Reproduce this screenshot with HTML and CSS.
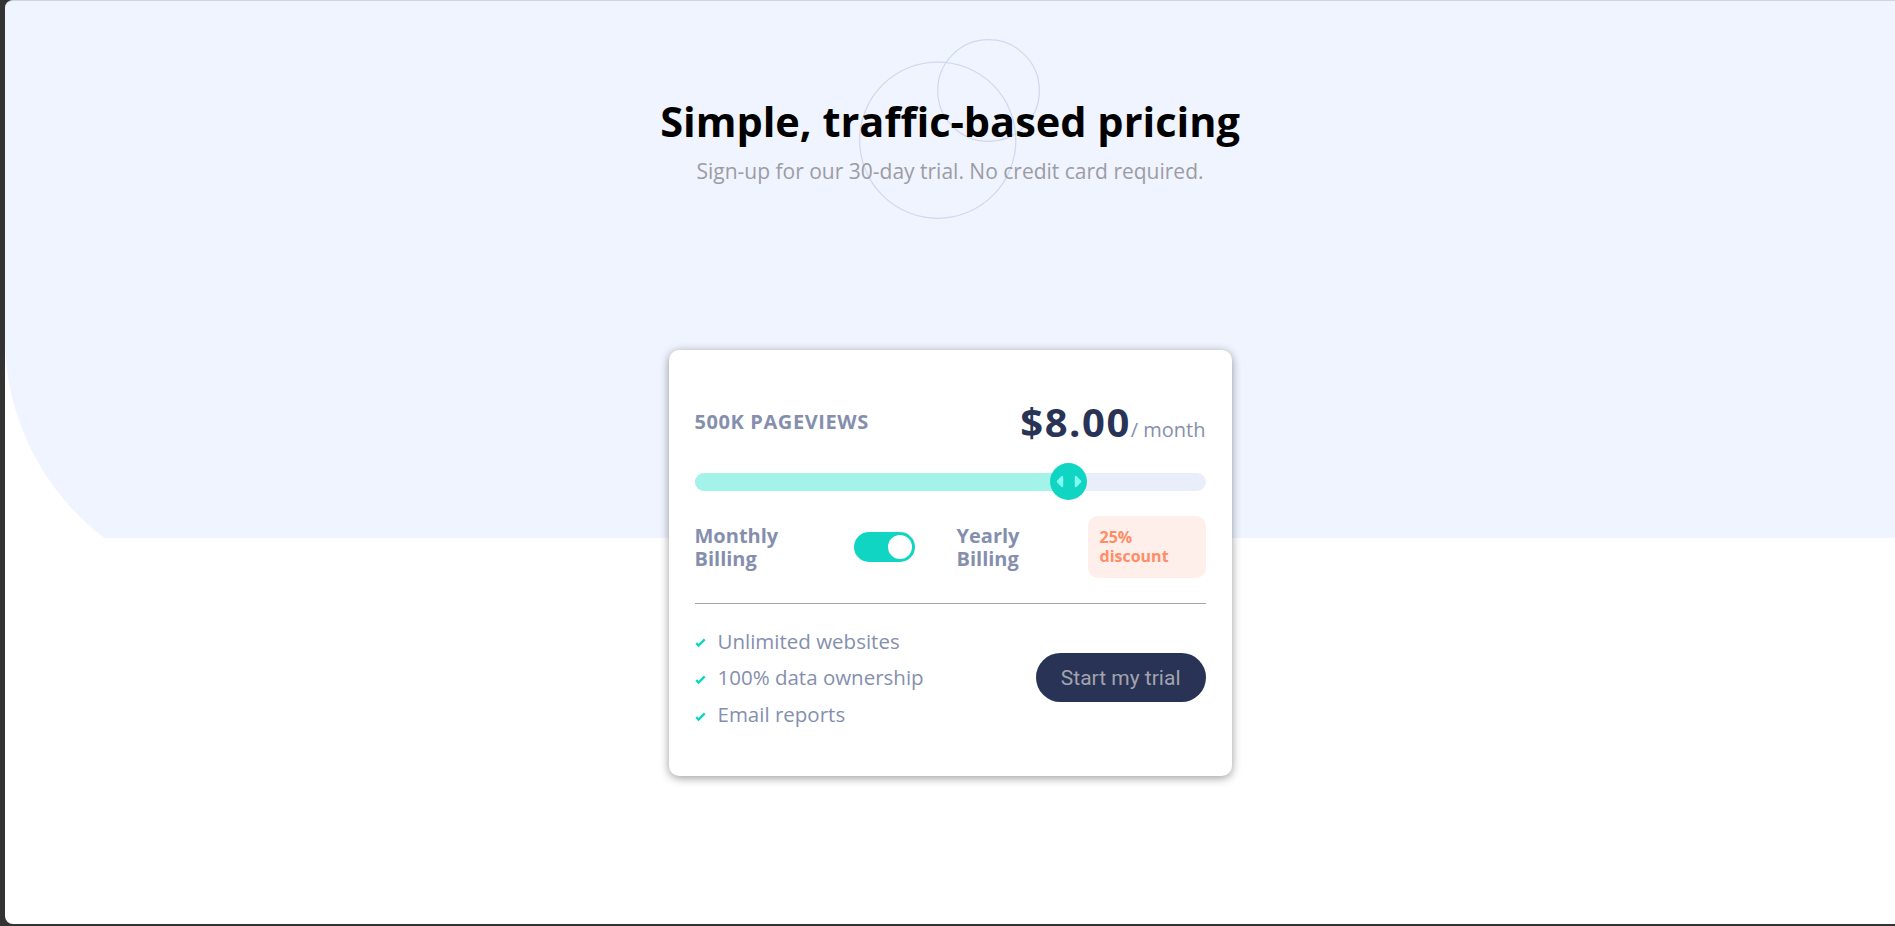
FILE: index.html
```html
<!DOCTYPE html>
<html lang="en">
<head>
  <meta charset="UTF-8" />
  <title>Interactive Pricing Component</title>
  <link rel="stylesheet" href="styles.css">
</head>
<body>

<div class="frame">
  <header class="hero">
    <!-- decorative circles behind the heading -->
    <svg class="circles" width="181" height="180" viewBox="0 0 146 145" aria-hidden="true">
      <g fill="none" stroke="#cfd8ef">
        <circle cx="63.5" cy="81.5" r="63" />
        <circle cx="104.5" cy="41.5" r="41" />
      </g>
    </svg>
    <h1>Simple, traffic-based pricing</h1>
    <p class="subtitle">Sign-up for our 30-day trial. No credit card required.</p>
  </header>

  <main class="card">
    <div class="card-head">
      <span class="pageviews">500K Pageviews</span>
      <p class="price"><span class="amount">$8.00</span><span class="period">/ month</span></p>
    </div>

    <!-- Slider: --value is the position (0..1) -->
    <div class="slider" style="--value: 0.75">
      <div class="track"><div class="track-fill"></div></div>
      <div class="thumb">
        <svg width="26" height="15" viewBox="0 0 22 13">
          <path fill="#80fff3" d="M16 2.558v7.884a1 1 0 001.735.679l3.639-3.943a1 1 0 000-1.356l-3.64-3.943A1 1 0 0016 2.558zM6 2.558v7.884a1 1 0 01-1.735.679L.626 7.178a1 1 0 010-1.356l3.64-3.943A1 1 0 016 2.558z"/>
        </svg>
      </div>
    </div>

    <div class="billing">
      <span class="billing-label">Monthly Billing</span>
      <span class="switch"><span class="knob"></span></span>
      <span class="billing-label">Yearly Billing</span>
      <span class="discount">25% discount</span>
    </div>

    <hr class="divider">

    <div class="card-foot">
      <ul class="features">
        <li><svg class="check" width="11" height="10" viewBox="0 0 9 8"><path fill="none" stroke="#10d5c2" stroke-width="2" d="M1 4.134l1.907 1.908L7.949 1"/></svg>Unlimited websites</li>
        <li><svg class="check" width="11" height="10" viewBox="0 0 9 8"><path fill="none" stroke="#10d5c2" stroke-width="2" d="M1 4.134l1.907 1.908L7.949 1"/></svg>100% data ownership</li>
        <li><svg class="check" width="11" height="10" viewBox="0 0 9 8"><path fill="none" stroke="#10d5c2" stroke-width="2" d="M1 4.134l1.907 1.908L7.949 1"/></svg>Email reports</li>
      </ul>
      <button class="button">Start my trial</button>
    </div>
  </main>
</div>

</body>
</html>
```

FILE: styles.css
```css
html, body {
  height: 100%;
}
body {
  margin: 0;
  padding: 0 0 2px 5px;
  box-sizing: border-box;
  background: #333;
  font-family: "Open Sans", "Noto Sans", sans-serif;
  overflow: hidden;
}
.frame {
  height: 924px;
  box-sizing: border-box;
  border-top: 1px solid #cfd4de;
  border-radius: 8px 0 0 8px;
  overflow: hidden;
  background: #fff url("data:image/svg+xml,%3Csvg xmlns='http://www.w3.org/2000/svg' width='1890' height='537'%3E%3Cpath fill='%23f0f4fe' d='M0 0H1890V537H99.34A251 251 0 0 1 0 337Z'/%3E%3C/svg%3E") no-repeat 0 0;
}

/* Header */
.hero {
  position: relative;
  padding-top: 92px;
  text-align: center;
}
.circles {
  position: absolute;
  top: 38px;
  left: calc(50% - 91px);
}
.hero h1 {
  position: relative;
  margin: 0;
  font-size: 41.5px;
  font-weight: 700;
  color: #000;
}
.subtitle {
  position: relative;
  margin: 8px 0 0;
  font-size: 21px;
  color: #9c9ca4;
}

/* Card */
.card {
  width: 511px;
  margin: 165px auto 0;
  padding: 44px 26px 43px;
  background: #fff;
  border-radius: 10px;
  box-shadow: 0 2px 10px rgba(0,0,0,0.4);
}
.card-head {
  display: flex;
  justify-content: space-between;
  align-items: center;
}
.pageviews {
  font-size: 20px;
  font-weight: 700;
  letter-spacing: 0.6px;
  text-transform: uppercase;
  color: #858fad;
}
.price {
  margin: 0;
  font-size: 40px;
}
.amount {
  font-weight: 700;
  letter-spacing: 1.5px;
  color: #293356;
}
.period {
  font-size: 20px;
  color: #858fad;
}

/* Slider */
.slider {
  position: relative;
  height: 37px;
  margin-top: 14px;
  display: flex;
  align-items: center;
}
.track {
  flex: 1;
  height: 18px;
  border-radius: 9px;
  background: #eaeefb;
  overflow: hidden;
}
.track-fill {
  height: 100%;
  width: calc(var(--value) * 100%);
  background: #a4f3eb;
}
.thumb {
  position: absolute;
  top: 0;
  left: calc((100% - 37px) * var(--value));
  width: 37px;
  height: 37px;
  border-radius: 50%;
  background: #10d5c2;
  display: flex;
  align-items: center;
  justify-content: center;
}

/* Billing toggle */
.billing {
  display: grid;
  grid-template-columns: 159px 103px 1fr auto;
  align-items: center;
  margin-top: 15.5px;
}
.billing-label {
  width: min-content;
  font-size: 20px;
  font-weight: 700;
  line-height: 23px;
  color: #858fad;
}
.switch {
  display: flex;
  justify-content: flex-end;
  align-items: center;
  width: 61px;
  height: 30px;
  padding: 3px;
  box-sizing: border-box;
  border-radius: 15px;
  background: #10d5c2;
}
.knob {
  width: 24px;
  height: 24px;
  border-radius: 50%;
  background: #fff;
}
.discount {
  width: 118px;
  height: 62px;
  box-sizing: border-box;
  padding: 12.5px 12px;
  border-radius: 10px;
  background: #feefea;
  color: #ff8c66;
  font-size: 16px;
  font-weight: 700;
  line-height: 18.5px;
}
.divider {
  margin: 25.5px 0 0;
  border: 0;
  border-top: 1px solid #a6a8ae;
}

/* Footer */
.card-foot {
  display: flex;
  justify-content: space-between;
  align-items: center;
  margin-top: 18.6px;
}
.features {
  margin: 0;
  padding: 0;
  list-style: none;
}
.features li {
  font-size: 20.5px;
  line-height: 36.7px;
  color: #858fad;
}
.check {
  vertical-align: middle;
  margin-right: 12px;
}
.button {
  height: 49px;
  padding: 0 25px;
  border: none;
  border-radius: 25px;
  background: #293356;
  color: #a2a4ae;
  font-family: Roboto, "Liberation Sans", sans-serif;
  font-size: 21px;
  cursor: pointer;
}
```
